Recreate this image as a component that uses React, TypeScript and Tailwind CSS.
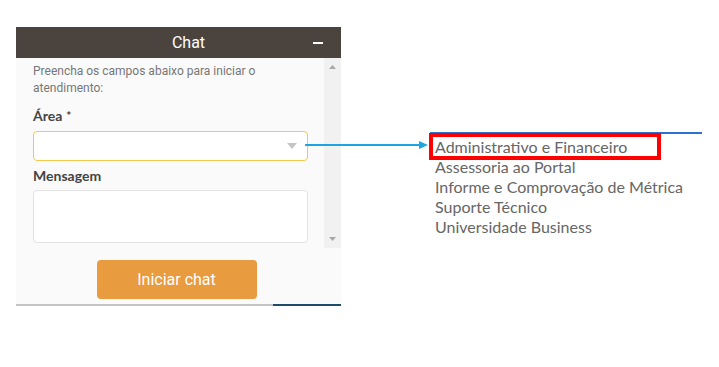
const areas = [
    'Administrativo e Financeiro',
    'Assessoria ao Portal',
    'Informe e Comprovação de Métrica',
    'Suporte Técnico',
    'Universidade Business',
];

function ChatPanel() {
    return (
        <div className="w-[325px] shrink-0 bg-[#fafafa] font-['Roboto',sans-serif]">
            <div className="flex h-[31px] items-center bg-[#4b443e] text-white">
                <span className="flex-1 pl-[66px] text-center text-[16px]">
                    Chat
                </span>
                <span className="flex w-[46px] justify-center">
                    <span className="block h-[2px] w-[10px] bg-white" />
                </span>
            </div>
            <div className="flex h-[190px]">
                <div className="flex-1 pt-[5px] pl-[17px] pr-[16px]">
                    <p className="text-[12px] leading-[17px] text-[#777]">
                        Preencha os campos abaixo para iniciar o
                        atendimento:
                    </p>
                    <label className="mt-[10px] block font-['Lato',sans-serif] text-[14px] font-bold leading-[18px] text-[#444]">
                        Área<span className="ml-[4px] text-[12px] align-top">*</span>
                    </label>
                    <div className="mt-[6px] flex h-[30px] items-center justify-end rounded-[4px] border border-[#f2c94c] bg-white pr-[10px]">
                        <svg width="10" height="6" viewBox="0 0 10 6">
                            <path d="M0 0h10L5 6z" fill="#c4c4c4" />
                        </svg>
                    </div>
                    <label className="mt-[6px] block font-['Lato',sans-serif] text-[14px] font-bold leading-[18px] text-[#444]">
                        Mensagem
                    </label>
                    <div className="mt-[5px] h-[53px] rounded-[4px] border border-[#e3e3e3] bg-white" />
                </div>
                <div className="flex w-[17px] flex-col items-center justify-between bg-[#f1f1f1] py-[7px]">
                    <svg width="7" height="4" viewBox="0 0 7 4">
                        <path d="M0 4h7L3.5 0z" fill="#a8a8a8" />
                    </svg>
                    <svg width="7" height="4" viewBox="0 0 7 4">
                        <path d="M0 0h7L3.5 4z" fill="#a8a8a8" />
                    </svg>
                </div>
            </div>
            <div className="flex justify-center pt-[12px] pb-[5px] pr-[4px]">
                <button className="h-[39px] w-[160px] rounded-[4px] bg-[#e99b3f] text-[16px] text-white">
                    Iniciar chat
                </button>
            </div>
            <div className="flex h-[2px]">
                <div className="w-[257px] bg-[#c4c4c4]" />
                <div className="flex-1 bg-[#1d4d6b]" />
            </div>
        </div>
    );
}

export default function App() {
    return (
        <div className="relative flex h-[367px] w-[719px] items-start overflow-hidden bg-white pt-[27px] pl-[16px]">
            <ChatPanel />
            <svg
                className="absolute top-[140px] left-[305px]"
                width="124"
                height="10"
                viewBox="0 0 124 10"
            >
                <path d="M0 5h116" stroke="#1ba6e3" strokeWidth="2" />
                <path d="M114 1l9 4-9 4z" fill="#1ba6e3" />
            </svg>
            <div className="mt-[110px] ml-[94px] font-['Lato',sans-serif] text-[16px] leading-[20px] text-[#666]">
                <div className="relative">
                    <div className="absolute -top-[5px] -left-[5px] h-[2px] w-[272px] bg-[#2f6fd1]" />
                    <div className="absolute -top-[4px] -left-[6px] h-[27px] w-[232px] border-[4px] border-[#ff0000]" />
                    {areas.map((a) => (
                        <div key={a} className="relative">
                            {a}
                        </div>
                    ))}
                </div>
            </div>
        </div>
    );
}
